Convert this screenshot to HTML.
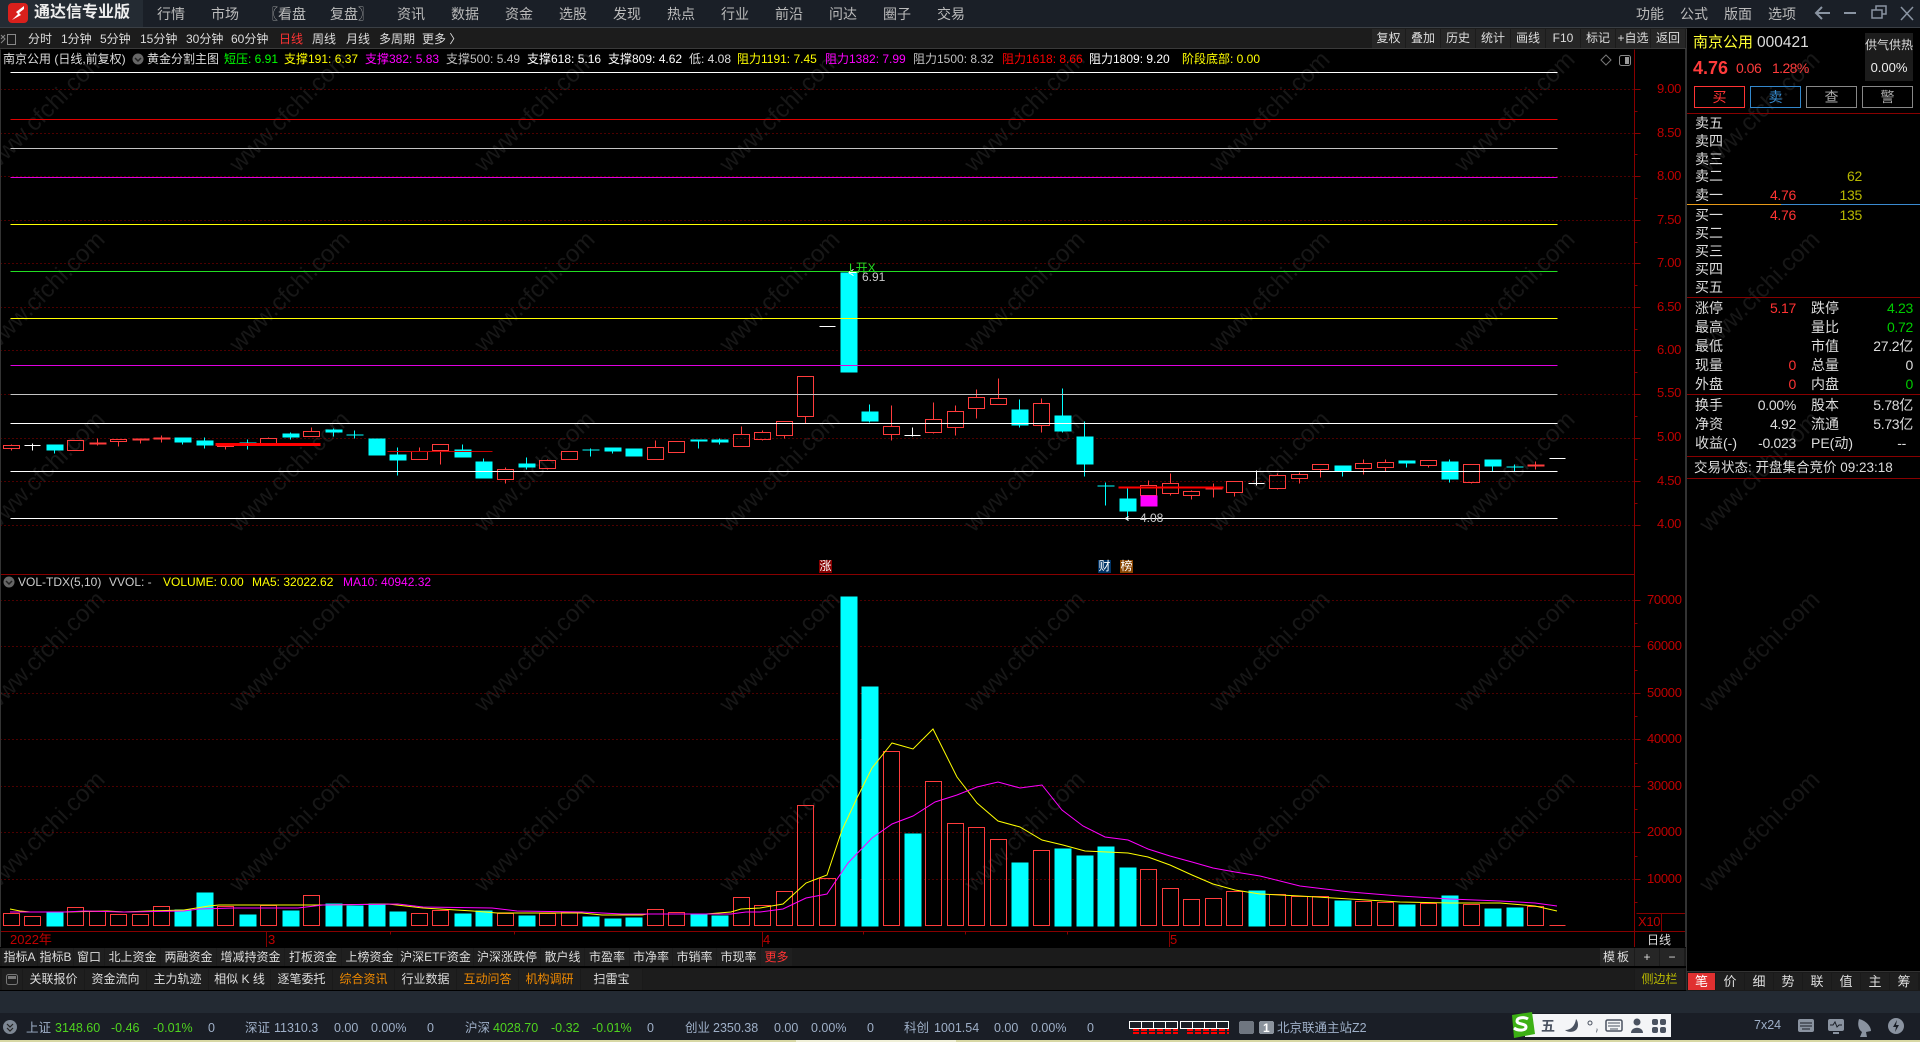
<!DOCTYPE html>
<html lang="zh"><head><meta charset="utf-8"><title>通达信专业版</title>
<style>
html,body{margin:0;padding:0;background:#000;width:1920px;height:1042px;overflow:hidden}
body{position:relative;font:12px/16px "Liberation Sans","Noto Sans CJK SC",sans-serif;color:#ddd}
div,span.a{position:absolute}
.t{position:absolute;white-space:nowrap;height:16px;line-height:16px}
.b{position:absolute;text-align:center;white-space:nowrap;background:#1f1f1f;box-sizing:border-box}
.m{font-size:14px;color:#bbb;top:6px}
.p{font-size:14px;top:0;color:#ddd}
.n{font-size:14px;letter-spacing:-.3px}
.ax{font-size:13px;color:#c00000;letter-spacing:-.3px}
.s{color:#9fb0c8;top:1020px;font-size:12.5px}
.g{color:#4fd41f;top:1020px;font-size:12.5px}
.r{text-align:right}
.o{color:#f08a00}
</style></head><body>

<svg style="position:absolute;left:0;top:0" width="1920" height="1042" font-family="Liberation Sans,sans-serif" font-size="24" fill="#171717">
<g text-anchor="middle">
<text transform="translate(50,117) rotate(-45)">www.cfchi.com</text><text transform="translate(295,117) rotate(-45)">www.cfchi.com</text><text transform="translate(540,117) rotate(-45)">www.cfchi.com</text><text transform="translate(785,117) rotate(-45)">www.cfchi.com</text><text transform="translate(1030,117) rotate(-45)">www.cfchi.com</text><text transform="translate(1275,117) rotate(-45)">www.cfchi.com</text><text transform="translate(1520,117) rotate(-45)">www.cfchi.com</text><text transform="translate(1765,117) rotate(-45)">www.cfchi.com</text>
<text transform="translate(50,297) rotate(-45)">www.cfchi.com</text><text transform="translate(295,297) rotate(-45)">www.cfchi.com</text><text transform="translate(540,297) rotate(-45)">www.cfchi.com</text><text transform="translate(785,297) rotate(-45)">www.cfchi.com</text><text transform="translate(1030,297) rotate(-45)">www.cfchi.com</text><text transform="translate(1275,297) rotate(-45)">www.cfchi.com</text><text transform="translate(1520,297) rotate(-45)">www.cfchi.com</text><text transform="translate(1765,297) rotate(-45)">www.cfchi.com</text>
<text transform="translate(50,477) rotate(-45)">www.cfchi.com</text><text transform="translate(295,477) rotate(-45)">www.cfchi.com</text><text transform="translate(540,477) rotate(-45)">www.cfchi.com</text><text transform="translate(785,477) rotate(-45)">www.cfchi.com</text><text transform="translate(1030,477) rotate(-45)">www.cfchi.com</text><text transform="translate(1275,477) rotate(-45)">www.cfchi.com</text><text transform="translate(1520,477) rotate(-45)">www.cfchi.com</text><text transform="translate(1765,477) rotate(-45)">www.cfchi.com</text>
<text transform="translate(50,657) rotate(-45)">www.cfchi.com</text><text transform="translate(295,657) rotate(-45)">www.cfchi.com</text><text transform="translate(540,657) rotate(-45)">www.cfchi.com</text><text transform="translate(785,657) rotate(-45)">www.cfchi.com</text><text transform="translate(1030,657) rotate(-45)">www.cfchi.com</text><text transform="translate(1275,657) rotate(-45)">www.cfchi.com</text><text transform="translate(1520,657) rotate(-45)">www.cfchi.com</text><text transform="translate(1765,657) rotate(-45)">www.cfchi.com</text>
<text transform="translate(50,837) rotate(-45)">www.cfchi.com</text><text transform="translate(295,837) rotate(-45)">www.cfchi.com</text><text transform="translate(540,837) rotate(-45)">www.cfchi.com</text><text transform="translate(785,837) rotate(-45)">www.cfchi.com</text><text transform="translate(1030,837) rotate(-45)">www.cfchi.com</text><text transform="translate(1275,837) rotate(-45)">www.cfchi.com</text><text transform="translate(1520,837) rotate(-45)">www.cfchi.com</text><text transform="translate(1765,837) rotate(-45)">www.cfchi.com</text>
</g></svg>

<svg style="position:absolute;left:0;top:0" width="1920" height="1042" fill="none">
<g transform="translate(.5,.5)" shape-rendering="crispEdges">
<path stroke="#9a0000" stroke-dasharray="1 3" d="M0 89H1634M0 133H1634M0 176H1634M0 220H1634M0 263H1634M0 307H1634M0 350H1634M0 394H1634M0 438H1634M0 481H1634M0 525H1634M0 600H1634M0 646H1634M0 693H1634M0 739H1634M0 786H1634M0 832H1634M0 879H1634"/>
<path stroke="#880000" d="M1634 49V947M0 574H1634M0 931H1685M1661 913V931M1685 913V931M1636 913H1685M1634 89h6M1634 111h3M1634 133h6M1634 154h3M1634 176h6M1634 198h3M1634 220h6M1634 242h3M1634 263h6M1634 285h3M1634 307h6M1634 329h3M1634 350h6M1634 372h3M1634 394h6M1634 416h3M1634 438h6M1634 459h3M1634 481h6M1634 503h3M1634 525h6M1634 600h6M1634 623h3M1634 646h6M1634 670h3M1634 693h6M1634 716h3M1634 739h6M1634 763h3M1634 786h6M1634 809h3M1634 832h6M1634 856h3M1634 879h6M1634 902h3M266 931v16M390 931v3M514 931v3M762 931v16M863 931v3M965 931v3M1067 931v3M1169 931v16"/>
<path stroke="#333" d="M0 49V947M1686 28V990M1685 28V990"/>

<path stroke="#ff3c3c" d="M3 445h16v3h-16zM11 444v1M11 448v2M67 440h16v10h-16zM110 439h16v2h-16zM118 441v5M217 444h16v2h-16zM225 446v3M260 438h16v6h-16zM268 437v1M303 431h16v5h-16zM311 427v4M411 451h16v8h-16zM419 447v4M432 444h16v6h-16zM440 450v14M497 469h16v10h-16zM505 467v2M505 479v4M539 460h16v8h-16zM547 459v1M547 468v1M561 451h16v8h-16zM647 447h16v12h-16zM655 440v7M668 441h16v11h-16zM733 434h16v12h-16zM741 426v8M754 432h16v7h-16zM762 430v2M762 439v1M776 421h16v14h-16zM784 435v3M797 376h16v40h-16zM805 416v7M883 426h16v8h-16zM891 405v21M891 434v6M925 419h16v13h-16zM933 402v17M933 432v1M947 411h16v16h-16zM955 405v6M955 427v8M968 397h16v11h-16zM976 389v8M976 408v10M990 398h16v6h-16zM998 378v20M1033 403h16v22h-16zM1041 398v5M1041 425v7M1140 485h16v10h-16zM1148 480v5M1162 483h16v10h-16zM1170 473v10M1170 493v2M1183 491h16v4h-16zM1191 490v1M1191 495v4M1226 481h16v11h-16zM1234 492v4M1269 475h16v13h-16zM1277 473v2M1277 488v1M1291 474h16v4h-16zM1299 472v2M1299 478v5M1312 464h16v5h-16zM1320 469v8M1355 463h16v5h-16zM1363 459v4M1363 468v6M1377 462h16v5h-16zM1385 459v3M1385 467v4M1420 460h16v5h-16zM1428 465v2M1463 464h16v18h-16zM1471 482v1M97 438v7M140 440v3M161 435v7M1213 483v14M1535 461v8"/>
<path fill="#ff3c3c" stroke="none" d="M89 442h17v2h-17zM132 438h17v2h-17zM153 437h17v2h-17zM1205 487h17v2h-17zM1527 464h17v2h-17z"/>
<path stroke="#0ff" d="M54 450v3M182 442v2M204 437v11M247 439v10M290 432v7M333 428v8M354 430v8M397 447v28M462 444v5M483 458v3M526 457v12M590 448v8M612 451v2M698 441v7M719 438v6M869 404v18M1019 399v28M1062 388v44M1084 421v55M1105 482v23M1127 487v32M1342 471v5M1406 463v4M1449 459v23M1492 466v5M1514 464v7"/>
<path fill="#0ff" stroke="none" d="M46 444h17v6h-17zM174 437h17v5h-17zM196 440h17v5h-17zM239 442h17v1h-17zM282 433h17v4h-17zM325 429h17v3h-17zM346 434h17v1h-17zM368 438h17v17h-17zM389 454h17v6h-17zM454 449h17v8h-17zM475 461h17v17h-17zM518 463h17v4h-17zM582 449h17v1h-17zM604 447h17v4h-17zM625 448h17v8h-17zM690 439h17v2h-17zM711 439h17v3h-17zM840 272h17v100h-17zM861 411h17v10h-17zM1011 409h17v16h-17zM1054 415h17v16h-17zM1076 436h17v28h-17zM1097 485h17v1h-17zM1119 498h17v13h-17zM1334 465h17v6h-17zM1398 460h17v3h-17zM1441 461h17v18h-17zM1484 459h17v7h-17zM1506 466h17v1h-17z"/>
<path stroke="#fff" d="M24 445h16M32 443v7M819 326h16M904 435h16M912 427v9M1549 458h16M1248 483h16M1256 470v15"/>
<rect x="1140" y="495" width="17" height="11" fill="#f0f" stroke="none"/>

<path stroke="#fff" d="M10 72H1557M10 423H1557M10 471H1557M10 518H1557"/>
<path stroke="#e00000" d="M10 119H1557"/>
<path stroke="#c4c4c4" d="M10 148H1557M10 394H1557"/>
<path stroke="#e000e0" d="M10 177H1557M10 365H1557"/>
<path stroke="#ff0" d="M10 224H1557M10 318H1557"/>
<path stroke="#22dd22" d="M10 271H1557"/>
<path stroke="#c80000" d="M387 451H492"/>
<path stroke="#f00" stroke-width="3" d="M215 444H320"/>
<path stroke="#f00" stroke-width="2" d="M1118 487H1223"/>
<path stroke="#fff" d="M848 272l5-3M848 272l5 3M848 272h10M1125 518l3-2M1125 518l3 2"/>

<path stroke="#ff3c3c" d="M3 913h16V925h-16zM24 916h16V925h-16zM67 907h16V925h-16zM89 911h16V925h-16zM110 914h16V925h-16zM132 914h16V925h-16zM153 906h16V925h-16zM217 906h16V925h-16zM260 905h16V925h-16zM303 895h16V925h-16zM411 913h16V925h-16zM432 910h16V925h-16zM497 913h16V925h-16zM539 913h16V925h-16zM561 912h16V925h-16zM647 909h16V925h-16zM668 912h16V925h-16zM733 897h16V925h-16zM754 905h16V925h-16zM776 891h16V925h-16zM797 805h16V925h-16zM819 878h16V925h-16zM883 751h16V925h-16zM925 781h16V925h-16zM947 823h16V925h-16zM968 827h16V925h-16zM990 839h16V925h-16zM1033 850h16V925h-16zM1140 869h16V925h-16zM1162 888h16V925h-16zM1183 899h16V925h-16zM1205 898h16V925h-16zM1226 891h16V925h-16zM1269 894h16V925h-16zM1291 896h16V925h-16zM1312 896h16V925h-16zM1355 901h16V925h-16zM1377 902h16V925h-16zM1420 903h16V925h-16zM1463 904h16V925h-16zM1527 906h16V925h-16zM1549 925h16"/>
<path fill="#0ff" stroke="none" d="M46 911h17V926h-17zM174 909h17V926h-17zM196 892h17V926h-17zM239 914h17V926h-17zM282 910h17V926h-17zM325 903h17V926h-17zM346 905h17V926h-17zM368 903h17V926h-17zM389 911h17V926h-17zM454 913h17V926h-17zM475 910h17V926h-17zM518 915h17V926h-17zM582 916h17V926h-17zM604 918h17V926h-17zM625 917h17V926h-17zM690 913h17V926h-17zM711 915h17V926h-17zM840 596h17V926h-17zM861 686h17V926h-17zM904 833h17V926h-17zM1011 862h17V926h-17zM1054 848h17V926h-17zM1076 855h17V926h-17zM1097 846h17V926h-17zM1119 867h17V926h-17zM1248 890h17V926h-17zM1334 900h17V926h-17zM1398 904h17V926h-17zM1441 895h17V926h-17zM1484 908h17V926h-17zM1506 907h17V926h-17z"/>
</g>
<polyline stroke="#ff0" points="10,909 20,911 30,912 65,912 107,911 124,912 149,911 184,910 209,906 219,905 298,905 323,905 388,904 423,908 473,911 497,913 582,913 602,915 642,915 647,914 706,914 731,912 741,909 760,908 783,904 806,883 827,875 842,830 857,798 872,768 892,743 913,749 933,729 957,777 977,803 998,821 1020,827 1042,840 1063,845 1085,851 1107,852 1128,853 1148,857 1170,865 1192,875 1213,884 1235,890 1260,894 1300,896 1350,899 1400,902 1450,903 1500,903 1535,906 1557,911"/>
<polyline stroke="#f0f" points="10,912 65,912 85,911 124,912 184,911 199,909 234,908 298,908 323,905 398,904 423,907 492,908 517,911 582,912 622,914 647,914 731,914 746,912 760,912 783,909 806,898 827,894 848,863 872,838 892,824 913,816 935,802 957,795 977,787 998,782 1020,788 1042,785 1062,810 1083,826 1105,837 1128,840 1148,849 1170,856 1192,862 1213,868 1235,872 1260,876 1300,886 1350,892 1400,896 1450,899 1500,901 1535,903 1557,906"/>
<path stroke="#777" d="M1606 55l5 5-5 5-5-5z"/>
<rect x="1619.5" y="55.5" width="11" height="10" rx="2" stroke="#888"/><rect x="1625" y="57" width="4" height="7" fill="#999"/>
<circle cx="138" cy="59" r="5.5" fill="#666"/><path d="M135 58l3 3 3-3" stroke="#222" stroke-width="1.5"/>
<circle cx="9" cy="582" r="5.5" fill="#666"/><path d="M6 581l3 3 3-3" stroke="#222" stroke-width="1.5"/>
</svg>

<div style="left:0;top:0;width:1920px;height:27px;background:#1a1f27"></div>
<div style="left:0;top:27px;width:1920px;height:1px;background:#3a3f45"></div>
<div style="left:0;top:0;width:143px;height:27px;background:#242b33"></div>
<svg style="position:absolute;left:8px;top:3px" width="20" height="20"><rect width="20" height="20" rx="4" fill="#d9201c"/><path d="M16 3 8 9 10 11 4 17 13 12 11 10 16 6z" fill="#fff"/></svg>
<div class="t" style="left:34px;top:4px;font-size:16px;font-weight:bold;color:#eee;line-height:18px;height:18px">通达信专业版</div>
<span class="t m" style="left:157px">行情</span><span class="t m" style="left:211px">市场</span><span class="t m" style="left:264px">〖看盘</span><span class="t m" style="left:330px">复盘〗</span><span class="t m" style="left:397px">资讯</span><span class="t m" style="left:451px">数据</span><span class="t m" style="left:505px">资金</span><span class="t m" style="left:559px">选股</span><span class="t m" style="left:613px">发现</span><span class="t m" style="left:667px">热点</span><span class="t m" style="left:721px">行业</span><span class="t m" style="left:775px">前沿</span><span class="t m" style="left:829px">问达</span><span class="t m" style="left:883px">圈子</span><span class="t m" style="left:937px">交易</span>
<span class="t m" style="left:1636px">功能</span><span class="t m" style="left:1680px">公式</span><span class="t m" style="left:1724px">版面</span><span class="t m" style="left:1768px">选项</span>
<svg style="position:absolute;left:1810px;top:0" width="110" height="27" fill="none" stroke="#8a94a2" stroke-width="2"><path d="M6 13H20M12 7l-6 6 6 6"/><path d="M34 13H46"/><path d="M62 10h10v8h-10zM66 10V6h10v8h-4" stroke-width="1.5"/><path d="M91 7l12 13M103 7L91 20" stroke-width="1.5"/></svg>

<div style="left:0;top:28px;width:1686px;height:20px;background:#1c1c1c"></div>
<div style="left:0;top:48px;width:1686px;height:1px;background:#3a3a3a"></div>
<svg style="position:absolute;left:0;top:32px" width="18" height="14" fill="none" stroke="#888"><path d="M1 3l4 4-4 4M5 3L1 7"/><rect x="7.5" y="2.5" width="8" height="10"/></svg>
<span class="t" style="left:28px;top:31px">分时</span><span class="t" style="left:61px;top:31px">1分钟</span><span class="t" style="left:100px;top:31px">5分钟</span><span class="t" style="left:140px;top:31px">15分钟</span><span class="t" style="left:186px;top:31px">30分钟</span><span class="t" style="left:231px;top:31px">60分钟</span><span class="t" style="left:279px;top:31px;color:#f33">日线</span><span class="t" style="left:312px;top:31px">周线</span><span class="t" style="left:346px;top:31px">月线</span><span class="t" style="left:379px;top:31px">多周期</span><span class="t" style="left:422px;top:31px">更多 〉</span>
<div class="b" style="left:1372px;top:29px;width:33px;height:19px;line-height:19px;background:#262626">复权</div><div class="b" style="left:1406px;top:29px;width:34px;height:19px;line-height:19px;background:#262626">叠加</div><div class="b" style="left:1441px;top:29px;width:34px;height:19px;line-height:19px;background:#262626">历史</div><div class="b" style="left:1476px;top:29px;width:34px;height:19px;line-height:19px;background:#262626">统计</div><div class="b" style="left:1511px;top:29px;width:34px;height:19px;line-height:19px;background:#262626">画线</div><div class="b" style="left:1546px;top:29px;width:34px;height:19px;line-height:19px;background:#262626">F10</div><div class="b" style="left:1581px;top:29px;width:34px;height:19px;line-height:19px;background:#262626">标记</div><div class="b" style="left:1616px;top:29px;width:34px;height:19px;line-height:19px;background:#262626">+自选</div><div class="b" style="left:1651px;top:29px;width:34px;height:19px;line-height:19px;background:#262626">返回</div>

<span class="t" style="left:3px;top:51px">南京公用 (日线,前复权)</span>
<span class="t" style="left:147px;top:51px">黄金分割主图</span>
<span class="t" style="left:224px;top:51px;color:#0f0">短压: 6.91</span>
<span class="t" style="left:284px;top:51px;color:#ff0">支撑191: 6.37</span>
<span class="t" style="left:365px;top:51px;color:#f0f">支撑382: 5.83</span>
<span class="t" style="left:446px;top:51px;color:#c0c0c0">支撑500: 5.49</span>
<span class="t" style="left:527px;top:51px;color:#fff">支撑618: 5.16</span>
<span class="t" style="left:608px;top:51px;color:#fff">支撑809: 4.62</span>
<span class="t" style="left:689px;top:51px;color:#ddd">低: 4.08</span>
<span class="t" style="left:737px;top:51px;color:#ff0">阻力1191: 7.45</span>
<span class="t" style="left:825px;top:51px;color:#f0f">阻力1382: 7.99</span>
<span class="t" style="left:913px;top:51px;color:#c0c0c0">阻力1500: 8.32</span>
<span class="t" style="left:1002px;top:51px;color:#f00">阻力1618: 8.66</span>
<span class="t" style="left:1089px;top:51px;color:#fff">阻力1809: 9.20</span>
<span class="t" style="left:1182px;top:51px;color:#ff0">阶段底部: 0.00</span>

<span class="t ax" style="left:1657px;top:81px">9.00</span><span class="t ax" style="left:1657px;top:125px">8.50</span><span class="t ax" style="left:1657px;top:168px">8.00</span><span class="t ax" style="left:1657px;top:212px">7.50</span><span class="t ax" style="left:1657px;top:255px">7.00</span><span class="t ax" style="left:1657px;top:299px">6.50</span><span class="t ax" style="left:1657px;top:342px">6.00</span><span class="t ax" style="left:1657px;top:385px">5.50</span><span class="t ax" style="left:1657px;top:429px">5.00</span><span class="t ax" style="left:1657px;top:473px">4.50</span><span class="t ax" style="left:1657px;top:516px">4.00</span>
<span class="t ax" style="left:1647px;top:592px">70000</span><span class="t ax" style="left:1647px;top:638px">60000</span><span class="t ax" style="left:1647px;top:685px">50000</span><span class="t ax" style="left:1647px;top:731px">40000</span><span class="t ax" style="left:1647px;top:778px">30000</span><span class="t ax" style="left:1647px;top:824px">20000</span><span class="t ax" style="left:1647px;top:871px">10000</span>
<span class="t ax" style="left:1638px;top:914px">X10</span>

<span class="t" style="left:849px;top:260px;color:#2d2;font-size:12px">L开X</span>
<span class="t" style="left:862px;top:269px;color:#ccc">6.91</span>
<span class="t" style="left:1140px;top:510px;color:#ccc">4.08</span>
<div style="left:819px;top:560px;width:13px;height:13px;background:#800;color:#fff;font-size:12px;line-height:13px;text-align:center">涨</div>
<div style="left:1098px;top:560px;width:13px;height:13px;background:#036;color:#fff;font-size:12px;line-height:13px;text-align:center">财</div>
<div style="left:1120px;top:560px;width:13px;height:13px;background:#840;color:#fff;font-size:12px;line-height:13px;text-align:center">榜</div>

<span class="t" style="left:18px;top:574px;color:#ccc">VOL-TDX(5,10)</span><span class="t" style="left:109px;top:574px;color:#ccc">VVOL: -</span>
<span class="t" style="left:163px;top:574px;color:#ff0">VOLUME: 0.00</span><span class="t" style="left:252px;top:574px;color:#ff0">MA5: 32022.62</span><span class="t" style="left:343px;top:574px;color:#f0f">MA10: 40942.32</span>

<span class="t" style="left:10px;top:932px;color:#c00000;font-size:13px">2022年</span>
<span class="t" style="left:268px;top:932px;color:#c00000;font-size:13px">3</span><span class="t" style="left:763px;top:932px;color:#c00000;font-size:13px">4</span><span class="t" style="left:1170px;top:932px;color:#c00000;font-size:13px">5</span>
<span class="t" style="left:1647px;top:932px;color:#ddd;font-size:12px">日线</span>

<div style="left:0;top:947px;width:1686px;height:20px;background:#1b1b1b;border-top:1px solid #000;border-bottom:1px solid #000;box-sizing:border-box"></div>
<div class="b" style="left:2px;top:948px;width:35px;height:18px;line-height:18px">指标A</div><div class="b" style="left:38px;top:948px;width:35px;height:18px;line-height:18px">指标B</div><div class="b" style="left:74px;top:948px;width:30px;height:18px;line-height:18px">窗口</div><div class="b" style="left:105px;top:948px;width:55px;height:18px;line-height:18px">北上资金</div><div class="b" style="left:161px;top:948px;width:55px;height:18px;line-height:18px">两融资金</div><div class="b" style="left:217px;top:948px;width:67px;height:18px;line-height:18px">增减持资金</div><div class="b" style="left:285px;top:948px;width:56px;height:18px;line-height:18px">打板资金</div><div class="b" style="left:342px;top:948px;width:55px;height:18px;line-height:18px">上榜资金</div><div class="b" style="left:398px;top:948px;width:75px;height:18px;line-height:18px">沪深ETF资金</div><div class="b" style="left:474px;top:948px;width:66px;height:18px;line-height:18px">沪深涨跌停</div><div class="b" style="left:541px;top:948px;width:43px;height:18px;line-height:18px">散户线</div><div class="b" style="left:585px;top:948px;width:44px;height:18px;line-height:18px">市盈率</div><div class="b" style="left:630px;top:948px;width:42px;height:18px;line-height:18px">市净率</div><div class="b" style="left:673px;top:948px;width:43px;height:18px;line-height:18px">市销率</div><div class="b" style="left:717px;top:948px;width:43px;height:18px;line-height:18px">市现率</div><div class="b" style="left:761px;top:948px;width:31px;height:18px;line-height:18px;color:#f33">更多</div>
<div class="b" style="left:1600px;top:948px;width:34px;height:18px;line-height:18px;letter-spacing:2px;background:#262626">模板</div><div class="b" style="left:1635px;top:948px;width:24px;height:18px;line-height:18px;background:#262626">+</div><div class="b" style="left:1660px;top:948px;width:24px;height:18px;line-height:18px;background:#262626">−</div>

<div style="left:0;top:967px;width:1686px;height:24px;background:#1a1a1a;border-top:1px solid #000;border-bottom:1px solid #000;box-sizing:border-box"></div>
<div class="b" style="left:2px;top:969px;width:20px;height:21px"><svg width="20" height="21" fill="none"><rect x="4.5" y="5.5" width="11" height="10" rx="2" stroke="#777"/><rect x="6" y="7" width="8" height="3" fill="#777"/></svg></div>
<div class="b" style="left:23px;top:969px;width:61px;height:21px;line-height:21px">关联报价</div><div class="b" style="left:85px;top:969px;width:61px;height:21px;line-height:21px">资金流向</div><div class="b" style="left:147px;top:969px;width:61px;height:21px;line-height:21px">主力轨迹</div><div class="b" style="left:209px;top:969px;width:61px;height:21px;line-height:21px">相似 K 线</div><div class="b" style="left:271px;top:969px;width:61px;height:21px;line-height:21px">逐笔委托</div><div class="b o" style="left:333px;top:969px;width:61px;height:21px;line-height:21px">综合资讯</div><div class="b" style="left:395px;top:969px;width:61px;height:21px;line-height:21px">行业数据</div><div class="b o" style="left:457px;top:969px;width:61px;height:21px;line-height:21px">互动问答</div><div class="b o" style="left:519px;top:969px;width:61px;height:21px;line-height:21px">机构调研</div><div class="b" style="left:581px;top:969px;width:61px;height:21px;line-height:21px">扫雷宝</div>
<div class="b" style="left:643px;top:969px;width:991px;height:21px;background:#1c1c1c"></div>
<div class="b" style="left:1635px;top:969px;width:49px;height:21px;line-height:21px;color:#b8b800">侧边栏</div>

<div style="left:1687px;top:971px;width:233px;height:20px;background:#1a1a1a;border-top:1px solid #333;box-sizing:border-box"></div>
<div class="b" style="left:1688px;top:973px;width:27px;height:17px;line-height:17px;background:#e03030;color:#fff;font-size:13px">笔</div><div class="b" style="left:1716px;top:973px;width:28px;height:17px;line-height:17px;font-size:13px">价</div><div class="b" style="left:1745px;top:973px;width:28px;height:17px;line-height:17px;font-size:13px">细</div><div class="b" style="left:1774px;top:973px;width:28px;height:17px;line-height:17px;font-size:13px">势</div><div class="b" style="left:1803px;top:973px;width:28px;height:17px;line-height:17px;font-size:13px">联</div><div class="b" style="left:1832px;top:973px;width:28px;height:17px;line-height:17px;font-size:13px">值</div><div class="b" style="left:1861px;top:973px;width:28px;height:17px;line-height:17px;font-size:13px">主</div><div class="b" style="left:1890px;top:973px;width:28px;height:17px;line-height:17px;font-size:13px">筹</div>

<span class="t" style="left:1693px;top:35px;font-size:15px;color:#ffff33">南京公用</span><span class="t" style="left:1757px;top:35px;font-size:15.5px;color:#ddd">000421</span>
<span class="t" style="left:1693px;top:60px;font-size:18px;font-weight:bold;color:#ff3c3c">4.76</span><span class="t" style="left:1736px;top:60px;font-size:14px;color:#ff3c3c;letter-spacing:-.5px">0.06</span><span class="t" style="left:1772px;top:60px;font-size:14px;color:#ff3c3c;letter-spacing:-.6px">1.28%</span>
<div style="left:1865px;top:33px;width:48px;height:48px;background:#1c1c1c;text-align:center;font-size:12px"><span style="display:block;line-height:24px">供气供热</span><span style="display:block;line-height:22px;font-size:13px;color:#eee">0.00%</span></div>
<div style="left:1694px;top:86px;width:51px;height:22px;border:1px solid #f33;box-sizing:border-box;text-align:center;line-height:20px;font-size:14px;color:#f33">买</div>
<div style="left:1750px;top:86px;width:51px;height:22px;border:1px solid #38c;box-sizing:border-box;text-align:center;line-height:20px;font-size:14px;color:#38c">卖</div>
<div style="left:1806px;top:86px;width:51px;height:22px;border:1px solid #888;box-sizing:border-box;text-align:center;line-height:20px;font-size:14px;color:#aaa">查</div>
<div style="left:1862px;top:86px;width:51px;height:22px;border:1px solid #888;box-sizing:border-box;text-align:center;line-height:20px;font-size:14px;color:#aaa">警</div>
<div style="left:1687px;top:113px;width:233px;height:1px;background:#800"></div>
<div style="left:1687px;top:204px;width:94px;height:1px;background:#e89a18"></div><div style="left:1781px;top:204px;width:139px;height:1px;background:#3a8ad0"></div>
<div style="left:1687px;top:297px;width:233px;height:1px;background:#800"></div>
<div style="left:1687px;top:394px;width:233px;height:1px;background:#800"></div>
<div style="left:1687px;top:456px;width:233px;height:1px;background:#800"></div>
<div style="left:1687px;top:478px;width:233px;height:1px;background:#800"></div>

<span class="t p" style="left:1695px;top:115px">卖五</span><span class="t p" style="left:1695px;top:133px">卖四</span><span class="t p" style="left:1695px;top:151px">卖三</span><span class="t p" style="left:1695px;top:168px">卖二</span><span class="t p" style="left:1695px;top:187px">卖一</span>
<span class="t p" style="left:1695px;top:207px">买一</span><span class="t p" style="left:1695px;top:225px">买二</span><span class="t p" style="left:1695px;top:243px">买三</span><span class="t p" style="left:1695px;top:261px">买四</span><span class="t p" style="left:1695px;top:279px">买五</span>
<span class="t p r n" style="right:124px;top:187px;color:#f33">4.76</span><span class="t p r n" style="right:124px;top:207px;color:#f33">4.76</span>
<span class="t p r n" style="right:58px;top:168px;color:#b8b800">62</span><span class="t p r n" style="right:58px;top:187px;color:#b8b800">135</span><span class="t p r n" style="right:58px;top:207px;color:#b8b800">135</span>

<span class="t p" style="left:1695px;top:300px">涨停</span><span class="t p r n" style="right:124px;top:300px;color:#f33">5.17</span><span class="t p" style="left:1811px;top:300px">跌停</span><span class="t p r n" style="right:7px;top:300px;color:#0c0">4.23</span>
<span class="t p" style="left:1695px;top:319px">最高</span><span class="t p" style="left:1811px;top:319px">量比</span><span class="t p r n" style="right:7px;top:319px;color:#0c0">0.72</span>
<span class="t p" style="left:1695px;top:338px">最低</span><span class="t p" style="left:1811px;top:338px">市值</span><span class="t p r n" style="right:7px;top:338px">27.2亿</span>
<span class="t p" style="left:1695px;top:357px">现量</span><span class="t p r n" style="right:124px;top:357px;color:#f33">0</span><span class="t p" style="left:1811px;top:357px">总量</span><span class="t p r n" style="right:7px;top:357px">0</span>
<span class="t p" style="left:1695px;top:376px">外盘</span><span class="t p r n" style="right:124px;top:376px;color:#f33">0</span><span class="t p" style="left:1811px;top:376px">内盘</span><span class="t p r n" style="right:7px;top:376px;color:#0c0">0</span>
<span class="t p" style="left:1695px;top:397px">换手</span><span class="t p r n" style="right:124px;top:397px">0.00%</span><span class="t p" style="left:1811px;top:397px">股本</span><span class="t p r n" style="right:7px;top:397px">5.78亿</span>
<span class="t p" style="left:1695px;top:416px">净资</span><span class="t p r n" style="right:124px;top:416px">4.92</span><span class="t p" style="left:1811px;top:416px">流通</span><span class="t p r n" style="right:7px;top:416px">5.73亿</span>
<span class="t p" style="left:1695px;top:435px">收益(-)</span><span class="t p r n" style="right:124px;top:435px">-0.023</span><span class="t p" style="left:1811px;top:435px">PE(动)</span><span class="t p r n" style="right:14px;top:435px">--</span>
<span class="t p" style="left:1694px;top:460px;font-size:13.5px">交易状态: 开盘集合竞价 09:23:18</span>

<div style="left:0;top:991px;width:1920px;height:22px;background:#232a33"></div>
<div style="left:0;top:1013px;width:1920px;height:27px;background:#1a1e26"></div>
<div style="left:0;top:1040px;width:1920px;height:2px;background:#d8d8a4"></div><div style="left:796px;top:1040px;width:160px;height:2px;background:#f0f0d8"></div>
<svg style="position:absolute;left:3px;top:1020px" width="15" height="15" fill="none"><circle cx="7" cy="7" r="7" fill="#7d8794"/><path d="M4 4l3 3 3-3M4 8l3 3 3-3" stroke="#222" stroke-width="1.2"/></svg>
<span class="t s" style="left:26px">上证</span><span class="t g" style="left:55px">3148.60</span><span class="t g" style="left:111px">-0.46</span><span class="t g" style="left:153px">-0.01%</span><span class="t s" style="left:208px">0</span>
<span class="t s" style="left:245px">深证</span><span class="t s" style="left:274px">11310.3</span><span class="t s" style="left:334px">0.00</span><span class="t s" style="left:371px">0.00%</span><span class="t s" style="left:427px">0</span>
<span class="t s" style="left:465px">沪深</span><span class="t g" style="left:493px">4028.70</span><span class="t g" style="left:551px">-0.32</span><span class="t g" style="left:592px">-0.01%</span><span class="t s" style="left:647px">0</span>
<span class="t s" style="left:685px">创业</span><span class="t s" style="left:713px">2350.38</span><span class="t s" style="left:774px">0.00</span><span class="t s" style="left:811px">0.00%</span><span class="t s" style="left:867px">0</span>
<span class="t s" style="left:904px">科创</span><span class="t s" style="left:934px">1001.54</span><span class="t s" style="left:994px">0.00</span><span class="t s" style="left:1031px">0.00%</span><span class="t s" style="left:1087px">0</span>
<svg style="position:absolute;left:1128px;top:1020px" width="150" height="16" fill="none" shape-rendering="crispEdges">
<path stroke="#fff" d="M1.5 1.5h48v7h-48zM13.5 1.5v7M25.5 1.5v7M37.5 1.5v7M52.5 1.5h48v7h-48zM64.5 1.5v7M76.5 1.5v7M88.5 1.5v7"/>
<path stroke="#f00" stroke-width="2" stroke-dasharray="6 2" d="M5 10H50M59 10H101M5 13H50M59 13H101"/>
<rect x="111" y="1" width="15" height="13" rx="2" fill="#6f7680"/><rect x="131" y="1" width="15" height="13" rx="2" fill="#8b939d"/>
</svg>
<span class="t" style="left:1263px;top:1020px;color:#fff;font-size:12px;font-weight:bold">1</span>
<span class="t s" style="left:1277px">北京联通主站Z2</span>
<span class="t s" style="left:1754px;top:1017px">7x24</span>
<div style="left:1525px;top:1014px;width:146px;height:23px;background:#f4f5f7"></div>
<svg style="position:absolute;left:1508px;top:1011px" width="28" height="28"><path d="M4 4 24 1 27 23 6 27Z" fill="#3cb014"/><path d="M20 8c-3-2-11-2-11 2s9 2 9 6-8 4-12 1" stroke="#fff" stroke-width="3" fill="none"/></svg>
<span class="t" style="left:1541px;top:1018px;font-size:14px;font-weight:bold;color:#4a5260">五</span>
<svg style="position:absolute;left:1560px;top:1014px" width="110" height="23" fill="#4a5260">
<path d="M16 5c-1 7-5 11-11 11 3 3 13 3 13-5 0-3-1-5-2-6z"/><circle cx="30" cy="9" r="2" fill="none" stroke="#4a5260"/><path d="M36 14c2 0 2 3 0 5l1-5z"/>
<rect x="46" y="6" width="16" height="11" rx="1.5" fill="none" stroke="#4a5260" stroke-width="1.5"/><path d="M48 9h12M48 12h12M50 15h8" stroke="#4a5260"/>
<circle cx="77" cy="8" r="3.5"/><path d="M71 19c0-7 12-7 12 0z"/>
<rect x="92" y="5" width="6" height="6" rx="2"/><rect x="100" y="5" width="6" height="6" rx="2"/><rect x="92" y="13" width="6" height="6" rx="2"/><rect x="100" y="13" width="6" height="6" rx="2"/>
</svg>
<svg style="position:absolute;left:1795px;top:1016px" width="115" height="22" fill="#8a93a0">
<rect x="3" y="3" width="16" height="13" rx="2"/><path d="M5 7h12M5 10h12M7 13h8" stroke="#1a1e26"/>
<rect x="33" y="3" width="16" height="12" rx="2"/><path d="M35 9h3l2-3 2 5 2-2h3" stroke="#1a1e26" fill="none"/><rect x="38" y="16" width="6" height="2"/>
<path d="M64 3c8 2 12 8 12 12l-5 1 1 5h-7l2-5c-3-2-5-7-3-13z"/>
<circle cx="101" cy="10" r="8"/><path d="M102 4l-4 7h3l-1 5 4-7h-3z" fill="#1a1e26"/>
</svg>
</body></html>
